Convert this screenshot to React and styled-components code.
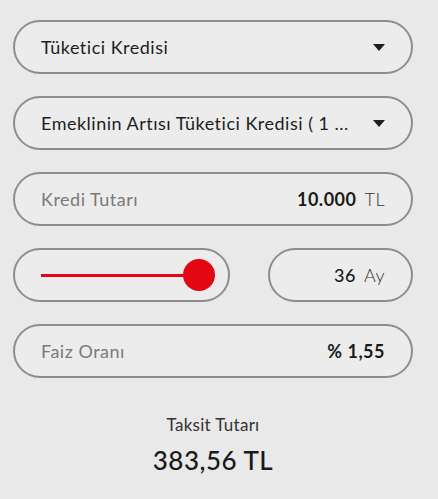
import styled, { createGlobalStyle } from "styled-components";

const Global = createGlobalStyle`
  body {
    margin: 0;
    background: #e9e9e9;
    font-family: Lato, "Open Sans", sans-serif;
    color: #222;
  }
`;

const Page = styled.div`
  width: 400px;
  padding: 20px 0 0 13px;
  display: flex;
  flex-direction: column;
  gap: 22px;
`;

const Pill = styled.div`
  box-sizing: border-box;
  height: 54px;
  width: ${(p) => p.width || "100%"};
  border: 2px solid #8d8d8d;
  border-radius: 27px;
  background: #ececec;
  display: flex;
  align-items: center;
  justify-content: ${(p) => (p.end ? "flex-end" : "flex-start")};
  padding: 0 26px;
  font-size: 18px;
  letter-spacing: 0.5px;
`;

const Row = styled.div`
  display: flex;
  justify-content: space-between;
`;

const SelectText = styled.span`
  flex: 1;
  color: #1e1e1e;
  white-space: nowrap;
  overflow: hidden;
`;

const Caret = styled.span`
  width: 0;
  height: 0;
  border-left: 6px solid transparent;
  border-right: 6px solid transparent;
  border-top: 7px solid #1e1e1e;
  margin-left: 8px;
`;

const Label = styled.span`
  flex: 1;
  color: #7a7a7a;
`;

const Value = styled.span`
  font-weight: ${(p) => p.weight || 700};
  color: #1a1a1a;
`;

const Unit = styled.span`
  font-weight: 300;
  color: #333;
  margin-left: 8px;
`;

const Track = styled.div`
  position: relative;
  width: 158px;
  height: 3px;
  background: #e30613;
`;

const Thumb = styled.div`
  position: absolute;
  right: -16px;
  top: -15px;
  width: 32px;
  height: 32px;
  border-radius: 50%;
  background: #e30613;
`;

const Result = styled.div`
  margin-top: 14px;
  display: flex;
  flex-direction: column;
  align-items: center;
  gap: 9px;
`;

const ResultLabel = styled.div`
  font-size: 17px;
  color: #333;
  letter-spacing: 0.3px;
`;

const ResultValue = styled.div`
  font-size: 26px;
  font-weight: 500;
  color: #1a1a1a;
  letter-spacing: 0.5px;
`;

export default function App() {
  return (
    <>
      <Global />
      <Page>
        <Pill>
          <SelectText>Tüketici Kredisi</SelectText>
          <Caret />
        </Pill>
        <Pill>
          <SelectText>Emeklinin Artısı Tüketici Kredisi ( 1 ...</SelectText>
          <Caret />
        </Pill>
        <Pill>
          <Label>Kredi Tutarı</Label>
          <Value>10.000</Value>
          <Unit>TL</Unit>
        </Pill>
        <Row>
          <Pill width="217px">
            <Track>
              <Thumb />
            </Track>
          </Pill>
          <Pill width="145px" end>
            <Value weight={500}>36</Value>
            <Unit>Ay</Unit>
          </Pill>
        </Row>
        <Pill>
          <Label>Faiz Oranı</Label>
          <Value>% 1,55</Value>
        </Pill>
        <Result>
          <ResultLabel>Taksit Tutarı</ResultLabel>
          <ResultValue>383,56 TL</ResultValue>
        </Result>
      </Page>
    </>
  );
}
